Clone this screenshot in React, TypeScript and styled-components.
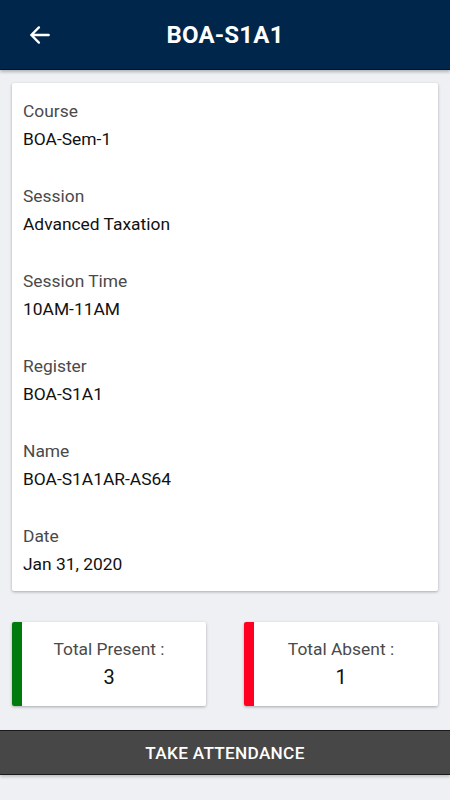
import React from 'react';
import styled, { createGlobalStyle } from 'styled-components';

const GlobalStyle = createGlobalStyle`
  html, body {
    margin: 0;
    padding: 0;
    background: #eef0f4;
    font-family: Roboto, "Noto Sans", sans-serif;
  }
`;

const Screen = styled.div`
  width: 450px;
  min-height: 800px;
  display: flex;
  flex-direction: column;
  background: #eef0f4;
`;

const Header = styled.header`
  height: 69px;
  background: #00264b;
  border-bottom: 1px solid #0a0f18;
  box-shadow: 0 2px 3px rgba(0, 0, 0, 0.25);
  display: flex;
  align-items: center;
`;

const BackButton = styled.button`
  background: none;
  border: none;
  padding: 0;
  margin-left: 27px;
  width: 26px;
  height: 26px;
  display: flex;
  align-items: center;
  justify-content: center;
  cursor: pointer;
`;

const Title = styled.h1`
  flex: 1;
  margin: 0 53px 0 0;
  text-align: center;
  color: #fff;
  font-size: 24px;
  font-weight: 700;
  letter-spacing: 0.2px;
`;

const Content = styled.main`
  padding: 13px 12px 0;
  display: flex;
  flex-direction: column;
`;

const InfoCard = styled.section`
  background: #fff;
  border-radius: 2px;
  box-shadow: 0 1px 3px rgba(0, 0, 0, 0.3);
  padding: 18px 11px 17px;
  display: flex;
  flex-direction: column;
  gap: 37px;
`;

const Field = styled.div`
  display: flex;
  flex-direction: column;
  gap: 8px;
`;

const Label = styled.div`
  font-size: 17.4px;
  color: #4a4a4a;
  line-height: 20px;
`;

const Value = styled.div`
  font-size: 17.4px;
  color: #111;
  line-height: 20px;
`;

const Stats = styled.div`
  display: flex;
  justify-content: space-between;
  margin-top: 31px;
`;

const StatCard = styled.div<{ accent: string }>`
  width: 194px;
  height: 84px;
  border-radius: 2px;
  background: linear-gradient(to right, ${(p) => p.accent} 10px, #fff 10px);
  box-shadow: 0 1px 3px rgba(0, 0, 0, 0.3);
  box-sizing: border-box;
  display: flex;
  flex-direction: column;
  align-items: center;
  padding-top: 17px;
  gap: 7px;
`;

const StatLabel = styled.div`
  font-size: 17.4px;
  color: #4a4a4a;
  line-height: 20px;
`;

const StatValue = styled.div`
  font-size: 20px;
  color: #111;
  line-height: 23px;
`;

const ActionButton = styled.button`
  margin-top: 24px;
  height: 45px;
  width: 100%;
  background: #474747;
  border: none;
  border-top: 1px solid #1a1a1a;
  border-bottom: 1px solid #1a1a1a;
  box-shadow: 0 2px 3px rgba(0, 0, 0, 0.2);
  color: #fff;
  font-family: Roboto, sans-serif;
  font-size: 17.2px;
  font-weight: 500;
  letter-spacing: 0.3px;
  text-transform: uppercase;
  cursor: pointer;
`;

const fields = [
  { label: 'Course', value: 'BOA-Sem-1' },
  { label: 'Session', value: 'Advanced Taxation' },
  { label: 'Session Time', value: '10AM-11AM' },
  { label: 'Register', value: 'BOA-S1A1' },
  { label: 'Name', value: 'BOA-S1A1AR-AS64' },
  { label: 'Date', value: 'Jan 31, 2020' },
];

const BackArrow = () => (
  <svg width="26" height="26" viewBox="0 0 24 24" fill="none">
    <path d="M20 12H4M11 5l-7 7 7 7" stroke="#fff" strokeWidth="2.2" strokeLinecap="round" strokeLinejoin="round" />
  </svg>
);

export default function App() {
  return (
    <>
      <GlobalStyle />
      <Screen>
        <Header>
          <BackButton aria-label="Back">
            <BackArrow />
          </BackButton>
          <Title>BOA-S1A1</Title>
        </Header>
        <Content>
          <InfoCard>
            {fields.map((f) => (
              <Field key={f.label}>
                <Label>{f.label}</Label>
                <Value>{f.value}</Value>
              </Field>
            ))}
          </InfoCard>
          <Stats>
            <StatCard accent="#007a0c">
              <StatLabel>Total Present :</StatLabel>
              <StatValue>3</StatValue>
            </StatCard>
            <StatCard accent="#ff0022">
              <StatLabel>Total Absent :</StatLabel>
              <StatValue>1</StatValue>
            </StatCard>
          </Stats>
        </Content>
        <ActionButton>Take Attendance</ActionButton>
      </Screen>
    </>
  );
}
